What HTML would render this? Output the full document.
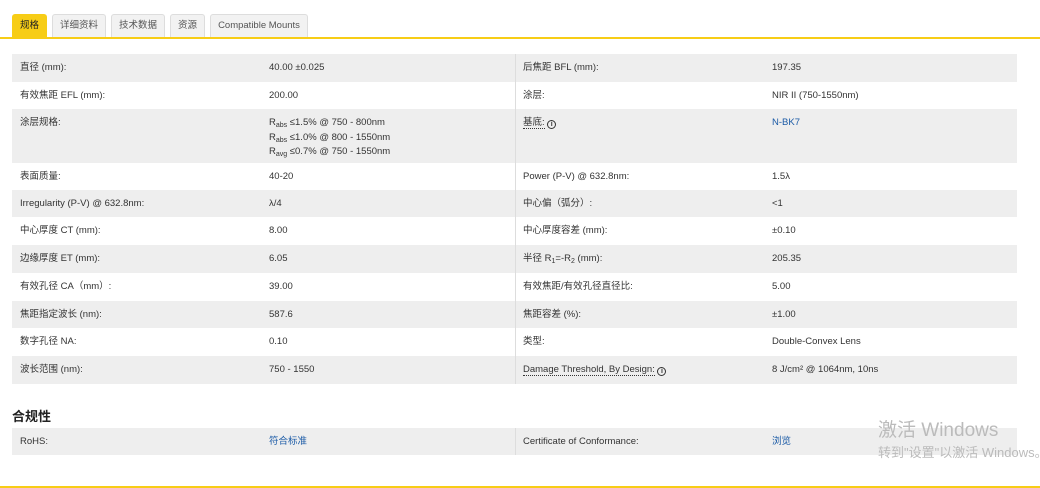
<!DOCTYPE html>
<html><head><meta charset="utf-8"><style>
*{margin:0;padding:0;box-sizing:border-box}
body{width:1040px;height:488px;background:#fff;font-family:"Liberation Sans","Noto Sans CJK SC",sans-serif;font-size:9.5px;color:#333;position:relative;overflow:hidden}
.tabs{position:absolute;left:12px;top:14px;display:flex;gap:5px}
.tab{height:23px;line-height:22px;padding:0 7px;background:#f2f2f2;border:1px solid #ddd;border-bottom:none;border-radius:3px 3px 0 0;color:#555;font-size:9.5px}
.tab.on{background:#f7cd16;border-color:#f7cd16;color:#222}
.yl{position:absolute;left:0;width:1040px;height:2px;background:#f7cd16}
.row{position:absolute;left:12px;width:1005px;display:flex}
.g{background:#eeeeee}
.c{padding-top:8px;line-height:11px}
.c1{position:absolute;left:8px}
.c2{position:absolute;left:257px}
.c3{position:absolute;left:511px}
.c4{position:absolute;left:760px}
.div{position:absolute;left:503px;top:0;bottom:0;width:1px;background:#ddd}
a{color:#1a5aa6;text-decoration:none}
sub{font-size:7px;vertical-align:-2px}
.dot{border-bottom:1px dotted #333}
.i{display:inline-block;width:9px;height:9px;border:1.2px solid #333;border-radius:50%;font-size:7px;line-height:7px;text-align:center;font-weight:bold;vertical-align:-1px}
h3{position:absolute;left:12px;top:406px;font-size:13px;font-weight:bold;color:#222}
.wm{position:absolute;left:878px;top:415px;color:#bbb;font-size:19px;white-space:nowrap}
.wm2{position:absolute;left:878px;top:442px;color:#bbb;font-size:13px;white-space:nowrap}
</style></head><body>
<div class="tabs"><div class="tab on">规格</div><div class="tab">详细资料</div><div class="tab">技术数据</div><div class="tab">资源</div><div class="tab">Compatible Mounts</div></div>
<div class="yl" style="top:37px"></div>

<div class="row g" style="top:54px;height:28px"><span class="c c1">直径 (mm):</span><span class="c c2">40.00 ±0.025</span><div class="div"></div><span class="c c3">后焦距 BFL (mm):</span><span class="c c4">197.35</span></div>
<div class="row" style="top:82px;height:27px"><span class="c c1">有效焦距 EFL (mm):</span><span class="c c2">200.00</span><div class="div"></div><span class="c c3">涂层:</span><span class="c c4">NIR II (750-1550nm)</span></div>
<div class="row g" style="top:109px;height:54px"><span class="c c1">涂层规格:</span><span class="c c2" style="line-height:11.5px">R<sub>abs</sub> ≤1.5% @ 750 - 800nm<br>R<sub>abs</sub> ≤1.0% @ 800 - 1550nm<br>R<sub>avg</sub> ≤0.7% @ 750 - 1550nm</span><div class="div"></div><span class="c c3"><span class="dot">基底:</span> <span class="i">i</span></span><span class="c c4"><a>N-BK7</a></span></div>
<div class="row" style="top:163px;height:27px"><span class="c c1">表面质量:</span><span class="c c2">40-20</span><div class="div"></div><span class="c c3">Power (P-V) @ 632.8nm:</span><span class="c c4">1.5λ</span></div>
<div class="row g" style="top:190px;height:27px"><span class="c c1">Irregularity (P-V) @ 632.8nm:</span><span class="c c2">λ/4</span><div class="div"></div><span class="c c3">中心偏（弧分）:</span><span class="c c4">&lt;1</span></div>
<div class="row" style="top:217px;height:28px"><span class="c c1">中心厚度 CT (mm):</span><span class="c c2">8.00</span><div class="div"></div><span class="c c3">中心厚度容差 (mm):</span><span class="c c4">±0.10</span></div>
<div class="row g" style="top:245px;height:28px"><span class="c c1">边缘厚度 ET (mm):</span><span class="c c2">6.05</span><div class="div"></div><span class="c c3">半径 R<sub>1</sub>=-R<sub>2</sub> (mm):</span><span class="c c4">205.35</span></div>
<div class="row" style="top:273px;height:28px"><span class="c c1">有效孔径 CA（mm）:</span><span class="c c2">39.00</span><div class="div"></div><span class="c c3">有效焦距/有效孔径直径比:</span><span class="c c4">5.00</span></div>
<div class="row g" style="top:301px;height:27px"><span class="c c1">焦距指定波长 (nm):</span><span class="c c2">587.6</span><div class="div"></div><span class="c c3">焦距容差 (%):</span><span class="c c4">±1.00</span></div>
<div class="row" style="top:328px;height:28px"><span class="c c1">数字孔径 NA:</span><span class="c c2">0.10</span><div class="div"></div><span class="c c3">类型:</span><span class="c c4">Double-Convex Lens</span></div>
<div class="row g" style="top:356px;height:28px"><span class="c c1">波长范围 (nm):</span><span class="c c2">750 - 1550</span><div class="div"></div><span class="c c3"><span class="dot">Damage Threshold, By Design:</span> <span class="i">i</span></span><span class="c c4">8 J/cm² @ 1064nm, 10ns</span></div>

<h3>合规性</h3>
<div class="row g" style="top:428px;height:27px"><span class="c c1">RoHS:</span><span class="c c2"><a>符合标准</a></span><div class="div"></div><span class="c c3">Certificate of Conformance:</span><span class="c c4"><a>浏览</a></span></div>
<div class="wm">激活 Windows</div>
<div class="wm2">转到"设置"以激活 Windows。</div>
<div class="yl" style="top:486px"></div>
</body></html>
